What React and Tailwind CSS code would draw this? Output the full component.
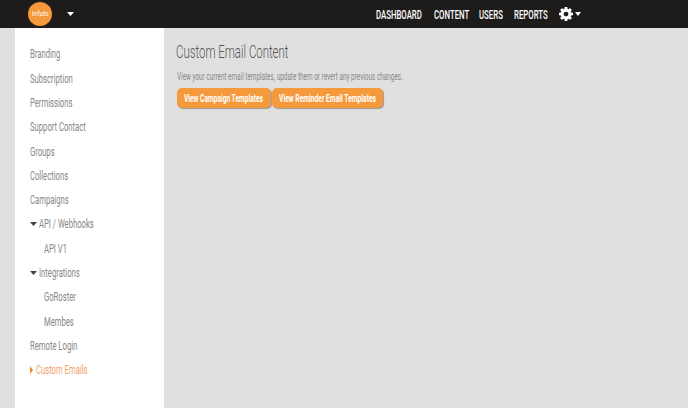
import React from "react";

const Caret = ({ className = "w-[8px] h-[5px]" }) => (
  <svg viewBox="0 0 8 5" preserveAspectRatio="none" className={`shrink-0 ${className}`}><path d="M0 0h8L4 5z" fill="currentColor" /></svg>
);
const Gear = () => (
  <svg viewBox="0 0 1536 1536" className="w-[14px] h-[14px] text-white"><path fill="currentColor" d="M1024 768q0-106-75-181t-181-75-181 75-75 181 75 181 181 75 181-75 75-181zm512-109v222q0 12-8 23t-20 13l-185 28q-19 54-39 91 35 50 107 138 10 12 10 25t-9 23q-27 37-99 108t-94 71q-12 0-26-9l-138-108q-44 23-91 38-16 136-29 186-7 28-36 28h-222q-14 0-24.500-8.500t-11.500-21.500l-28-184q-49-16-90-37l-141 107q-10 9-25 9-14 0-25-11-126-114-165-168-7-10-7-23 0-12 8-23 15-21 51-66.500t54-70.500q-27-50-41-99l-183-27q-13-2-21-12.500t-8-23.500v-222q0-12 8-23t19-13l186-28q14-46 39-92-40-57-107-138-10-12-10-24 0-10 9-23 26-36 98.500-107.500t94.500-71.500q13 0 26 10l138 107q44-23 91-38 16-136 29-186 7-28 36-28h222q14 0 24.500 8.500t11.500 21.500l28 184q49 16 90 37l142-107q9-9 24-9 13 0 25 10 129 119 165 170 7 8 7 22 0 12-8 23-15 21-51 66.500t-54 70.500q26 50 41 98l183 28q13 2 21 12.500t8 23.500z" /></svg>
);

const items = [
  { t: "Branding" }, { t: "Subscription" }, { t: "Permissions" }, { t: "Support Contact" },
  { t: "Groups" }, { t: "Collections" }, { t: "Campaigns" },
  { t: "API / Webhooks", open: true }, { t: "API V1", sub: true },
  { t: "Integrations", open: true }, { t: "GoRoster", sub: true }, { t: "Membes", sub: true },
  { t: "Remote Login" }, { t: "Custom Emails", active: true },
];

const Sq = ({ children, className = "" }) => (
  <span className={`inline-block whitespace-nowrap origin-left ${className}`}>{children}</span>
);

export default function App() {
  return (
    <div className="w-[688px] h-[408px] overflow-hidden bg-[#e0e0e0] flex flex-col font-['Roboto',sans-serif]">
      <header className="h-[28px] shrink-0 bg-[#1e1c1b] flex items-center pl-[28px] pr-[107px]">
        <div className="w-[24px] h-[24px] rounded-full bg-[#f59a3c] flex items-center justify-center text-[8px] text-white">
          <span className="scale-x-[0.8]">infuto</span>
        </div>
        <Caret className="ml-[15px] -mt-[1px] w-[7px] h-[4px] text-white" />
        <nav className="ml-auto flex items-center gap-[12px] text-white text-[13px] font-medium leading-none">
          <span className="w-[46px]"><Sq className="scale-x-[0.6]">DASHBOARD</Sq></span>
          <span className="w-[33px]"><Sq className="scale-x-[0.6]">CONTENT</Sq></span>
          <span className="w-[23px]"><Sq className="scale-x-[0.6]">USERS</Sq></span>
          <span className="w-[34px]"><Sq className="scale-x-[0.6]">REPORTS</Sq></span>
          <span className="flex items-center gap-[2px] -ml-[1px]"><Gear /><Caret className="w-[6px] h-[4px] text-white" /></span>
        </nav>
      </header>
      <div className="flex flex-1 min-h-0 pl-[15px]">
        <aside className="w-[149px] bg-white pt-[14px] pl-[15px] text-[13px] text-[#888]">
          {items.map((i) => (
            <div key={i.t} className={`h-[24.3px] flex items-center ${i.sub ? "pl-[14px]" : ""} ${i.active ? "text-[#f0a468]" : ""}`}>
              {i.open && <Caret className="mr-[2px] w-[7px] h-[4px] text-[#444]" />}
              {i.active && <span className="w-0 h-0 mr-[3px] border-y-[4px] border-y-transparent border-l-[3px] border-l-[#f0882a]" />}
              <Sq className="scale-x-[0.59]">{i.t}</Sq>
            </div>
          ))}
        </aside>
        <main className="pl-[12px] pt-[14px]">
          <h1 className="text-[19px] font-light leading-[20px] text-[#555]"><Sq className="scale-x-[0.6]">Custom Email Content</Sq></h1>
          <p className="mt-[9px] text-[10px] leading-[12px] text-[#888]"><Sq className="ml-[1px] scale-x-[0.64]">View your current email templates, update them or revert any previous changes.</Sq></p>
          <div className="mt-[5px] flex">
            <button className="ml-[1px] h-[20px] w-[94px] rounded-[5px] bg-[#f59a3c] text-white text-[10px] font-bold shadow-[1px_1px_1px_#999] pl-[7px] text-left"><Sq className="scale-x-[0.66]">View Campaign Templates</Sq></button>
            <button className="ml-[1px] h-[20px] w-[111px] rounded-[5px] bg-[#f59a3c] text-white text-[10px] font-bold shadow-[1px_1px_1px_#999] pl-[7px] text-left"><Sq className="scale-x-[0.67]">View Reminder Email Templates</Sq></button>
          </div>
        </main>
      </div>
    </div>
  );
}
